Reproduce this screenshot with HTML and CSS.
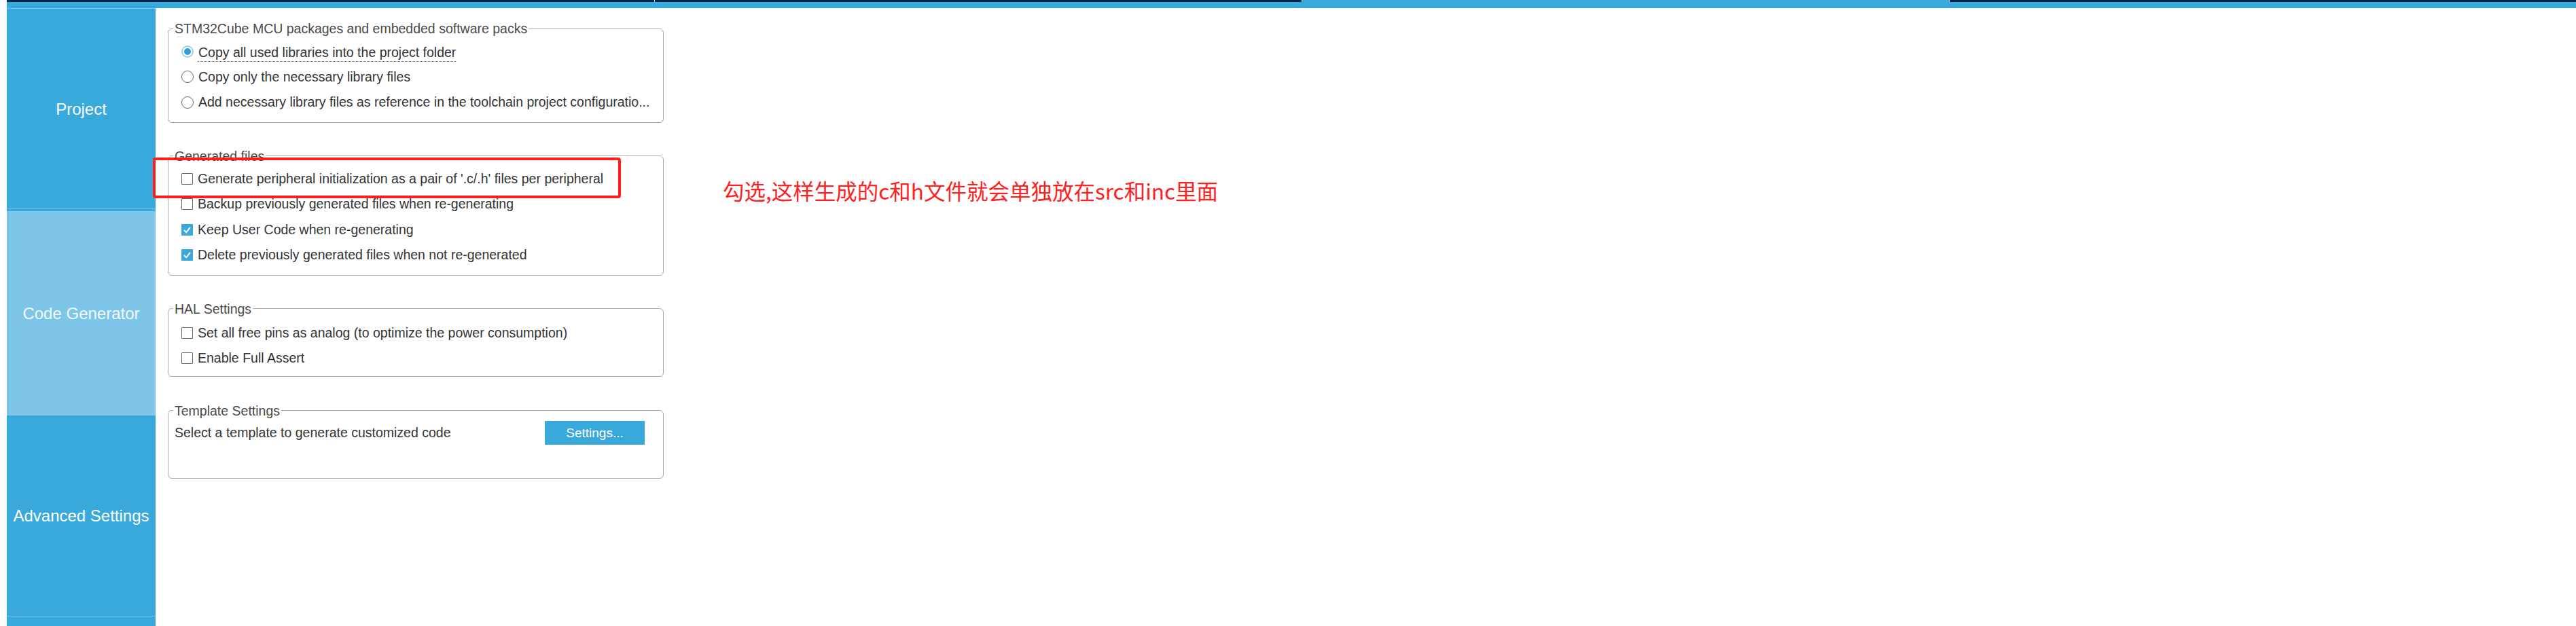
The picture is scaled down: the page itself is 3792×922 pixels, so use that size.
FILE: index.html
```html
<!DOCTYPE html>
<html lang="en">
<head>
<meta charset="utf-8">
<title>Project Manager - Code Generator</title>
<link rel="stylesheet" href="styles.css">
</head>
<body>
<div class="app">
  <div class="tabs">
    <div class="tab"></div>
    <div class="tab"></div>
    <div class="tab active"></div>
    <div class="tab last"></div>
  </div>
  <div class="strip"></div>
  <div class="main">
    <nav class="side">
      <div class="nav-item first">Project</div>
      <div class="nav-item current">Code Generator</div>
      <div class="nav-item third">Advanced Settings</div>
      <div class="nav-item rest"></div>
    </nav>
    <div class="content">
      <fieldset class="group g1">
        <legend>STM32Cube MCU packages and embedded software packs</legend>
        <div class="row"><span class="radio on"></span><span class="label focus">Copy all used libraries into the project folder</span></div>
        <div class="row"><span class="radio"></span><span class="label">Copy only the necessary library files</span></div>
        <div class="row"><span class="radio"></span><span class="label">Add necessary library files as reference in the toolchain project configuratio...</span></div>
      </fieldset>
      <fieldset class="group g2">
        <legend>Generated files</legend>
        <div class="row"><span class="check"></span><span class="label">Generate peripheral initialization as a pair of '.c/.h' files per peripheral</span></div>
        <div class="row"><span class="check"></span><span class="label">Backup previously generated files when re-generating</span></div>
        <div class="row"><span class="check on"><svg viewBox="0 0 17 17" width="17" height="17"><polyline points="4,9 7.2,12.3 13,4.8" fill="none" stroke="#fff" stroke-width="2"/></svg></span><span class="label">Keep User Code when re-generating</span></div>
        <div class="row"><span class="check on"><svg viewBox="0 0 17 17" width="17" height="17"><polyline points="4,9 7.2,12.3 13,4.8" fill="none" stroke="#fff" stroke-width="2"/></svg></span><span class="label">Delete previously generated files when not re-generated</span></div>
      </fieldset>
      <fieldset class="group g3">
        <legend>HAL Settings</legend>
        <div class="row"><span class="check"></span><span class="label">Set all free pins as analog (to optimize the power consumption)</span></div>
        <div class="row"><span class="check"></span><span class="label">Enable Full Assert</span></div>
      </fieldset>
      <fieldset class="group g4">
        <legend>Template Settings</legend>
        <div class="row tpl"><span class="label">Select a template to generate customized code</span><button class="btn">Settings...</button></div>
      </fieldset>
    </div>
  </div>
  <div class="callout"></div>
  <div class="note">勾选,这样生成的c和h文件就会单独放在src和inc里面</div>
</div>
</body>
</html>
```
FILE: styles.css
```css
html, body {
  margin: 0;
  padding: 0;
  background: #ffffff;
}
body {
  font-family: "Liberation Sans", Arial, sans-serif;
  width: 3792px;
  height: 922px;
  overflow: hidden;
}
.app {
  position: relative;
  padding-left: 10px;
  height: 922px;
  box-sizing: border-box;
}
.tabs {
  display: flex;
  gap: 1px;
  height: 3px;
  background: #c9d6e3;
}
.tab {
  flex: 0 0 952px;
  background: #03234b;
}
.tab:first-child {
  flex-basis: 953px;
}
.tab.active {
  background: #39a9dc;
}
.tab.last {
  flex: 1 1 auto;
}
.strip {
  height: 9px;
  background: #39a9dc;
}
.main {
  display: flex;
  align-items: flex-start;
}
.side {
  width: 219px;
  flex: 0 0 219px;
  display: flex;
  flex-direction: column;
}
.nav-item {
  display: flex;
  align-items: center;
  justify-content: center;
  background: #39a9dc;
  color: #ffffff;
  font-size: 24px;
  box-sizing: border-box;
}
.nav-item.first {
  height: 296px;
  padding-top: 2px;
  border-top: 1px solid #6cc0e8;
  border-bottom: 1px solid #6cc0e8;
}
.nav-item.current {
  height: 304px;
  background: #7dc6e9;
  border-top: 3px solid #39a9dc;
  color: #f4fbff;
}
.nav-item.third {
  height: 296px;
  border-bottom: 1px solid #6cc0e8;
}
.nav-item.rest {
  height: 20px;
}
.content {
  padding: 19px 0 0 18px;
  display: flex;
  flex-direction: column;
  gap: 38px;
}
.group {
  margin: 0;
  width: 730px;
  box-sizing: border-box;
  border: 1px solid #a9a9a9;
  border-radius: 6px;
  padding: 4px 0 10px 7px;
  min-width: 0;
}
.group legend {
  padding: 0 2px;
  font-size: 19.5px;
  line-height: 22px;
  color: #4a4a4a;
}
.g3 {
  padding-top: 6px;
  padding-bottom: 7px;
}
.g4 {
  margin-top: 1px;
  padding-top: 3px;
  padding-bottom: 47px;
}
.row {
  display: flex;
  align-items: center;
  height: 37.5px;
  margin-left: 12px;
  gap: 7px;
  font-size: 19.5px;
  color: #333333;
}
.label {
  white-space: nowrap;
}
.label.focus {
  border-bottom: 1px dotted #555555;
  line-height: 22px;
  margin-top: 5px;
  padding-bottom: 2px;
}
.radio {
  width: 18px;
  height: 18px;
  flex: 0 0 18px;
  box-sizing: border-box;
  border: 1.5px solid #6a6a6a;
  border-radius: 50%;
  background: #ffffff;
  display: flex;
  align-items: center;
  justify-content: center;
}
.radio.on {
  border: 2px solid #9fd2ee;
}
.radio.on::after {
  content: "";
  width: 10px;
  height: 10px;
  border-radius: 50%;
  background: #2f9fd9;
}
.check {
  width: 17px;
  height: 17px;
  flex: 0 0 17px;
  box-sizing: border-box;
  border: 1.5px solid #6a6a6a;
  border-radius: 1px;
  background: #ffffff;
  display: flex;
}
.check.on {
  border: none;
  background: #39a9dc;
}
.row.tpl {
  margin-left: 2px;
  height: 38px;
  justify-content: space-between;
  padding-right: 27px;
}
.btn {
  width: 147px;
  height: 35px;
  border: none;
  background: #39a9dc;
  color: #ffffff;
  font-family: "Liberation Sans", Arial, sans-serif;
  font-size: 19px;
  padding: 0;
}
.callout {
  position: absolute;
  left: 225px;
  top: 232px;
  width: 689px;
  height: 60px;
  box-sizing: border-box;
  border: 4px solid #ff1e1e;
  border-radius: 4px;
}
.note {
  position: absolute;
  left: 1064px;
  top: 260px;
  font-family: "Noto Sans CJK SC", "Noto Sans", sans-serif;
  font-size: 31.5px;
  line-height: 40px;
  color: #ff2020;
  white-space: nowrap;
}
```
